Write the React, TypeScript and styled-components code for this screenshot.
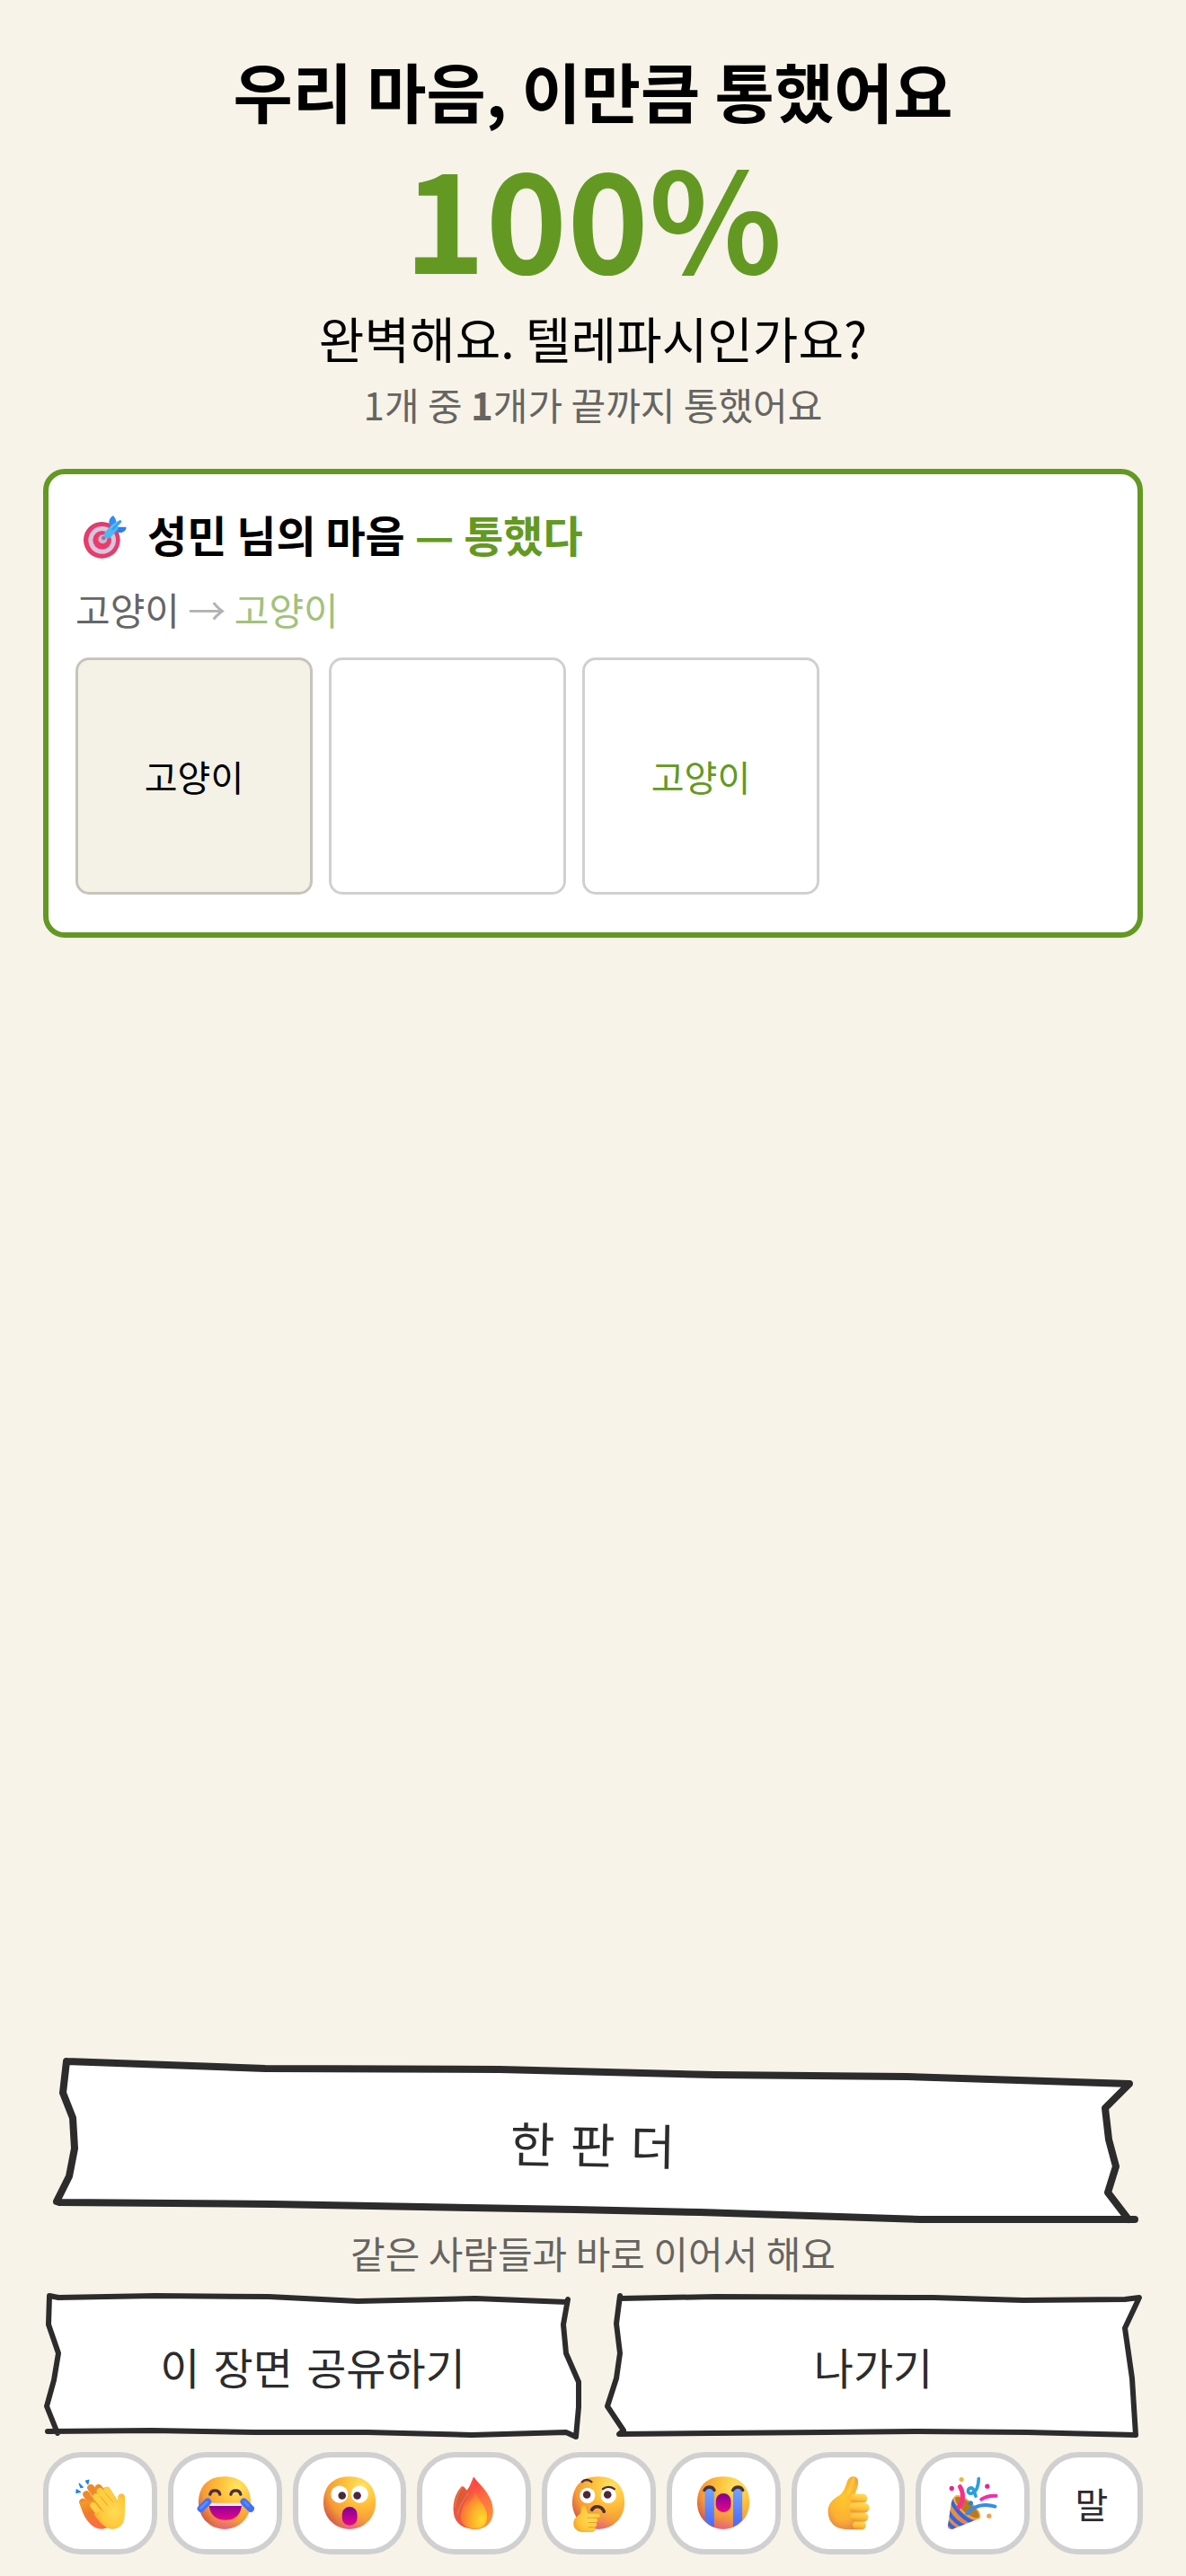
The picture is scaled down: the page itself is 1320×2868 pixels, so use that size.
import React from 'react';
import styled, { createGlobalStyle } from 'styled-components';

const GREEN = '#639922';
const INK = '#2c2c2c';

const GlobalStyle = createGlobalStyle`
  * {
    box-sizing: border-box;
  }

  body {
    margin: 0;
    background: #f7f3e8;
    color: #000;
    font-family: 'Noto Sans CJK KR', 'Noto Sans', sans-serif;
  }

  h1, h2, p {
    margin: 0;
  }

  button {
    font-family: 'DejaVu Sans', 'Noto Sans CJK KR', sans-serif;
    cursor: pointer;
  }
`;

const Page = styled.div`
  min-height: 100vh;
  padding: 48px 48px 24px;
  display: flex;
  flex-direction: column;
`;

const Header = styled.header`
  text-align: center;
  margin-bottom: 42px;
`;

const Title = styled.h1`
  font-size: 72px;
  line-height: 104px;
  font-weight: 700;
`;

const Score = styled.p`
  color: ${GREEN};
  font-size: 154px;
  line-height: 172px;
  font-weight: 700;
`;

const Verdict = styled.p`
  margin-top: 12px;
  font-size: 55px;
  line-height: 78px;
`;

const Note = styled.p`
  color: #666461;
  font-size: 42px;
  line-height: 60px;
`;

const Summary = styled(Note)`
  margin-top: 6px;
`;

const Results = styled.main`
  flex: 1;
`;

const Card = styled.section`
  padding: 30px 30px 42px;
  background: #fff;
  border: 6px solid ${GREEN};
  border-radius: 24px;
`;

const CardTitle = styled.h2`
  display: flex;
  align-items: center;
  font-size: 48px;
  line-height: 72px;
  font-weight: 700;

  svg {
    width: 60px;
    height: 60px;
    margin-right: 20px;
  }
`;

const Matched = styled.span`
  color: ${GREEN};
`;

const Chain = styled.p`
  margin: 18px 0 24px;
  color: #666;
  font-size: 42px;
  line-height: 60px;
`;

const Arrow = styled.span`
  color: #b2b2b2;
`;

const LastWord = styled.span`
  color: #a1c27a;
`;

const Steps = styled.div`
  display: flex;
  gap: 18px;
`;

const Step = styled.div<{ $kind: 'first' | 'middle' | 'last' }>`
  width: 264px;
  height: 264px;
  display: flex;
  align-items: center;
  justify-content: center;
  font-size: 40px;
  border: 3px solid ${(props) => (props.$kind === 'first' ? '#c8c4ba' : '#d0d0d0')};
  border-radius: 15px;
  background: ${(props) => (props.$kind === 'first' ? '#f4f1e6' : '#fff')};
  color: ${(props) => (props.$kind === 'last' ? GREEN : '#000')};
`;

const Footer = styled.footer`
  display: flex;
  flex-direction: column;
`;

const FooterNote = styled(Note)`
  text-align: center;
  margin-bottom: 18px;
`;

const PaperButton = styled.button<{ $large?: boolean }>`
  position: relative;
  flex: 1;
  min-height: ${(props) => (props.$large ? 186 : 156)}px;
  padding: 0;
  border: none;
  background: none;
  color: ${INK};
  font-size: ${(props) => (props.$large ? 54 : 48)}px;
`;

const Outline = styled.svg`
  position: absolute;
  inset: 0;
  width: 100%;
  height: 100%;
  overflow: visible;
`;

const Fill = styled.path`
  fill: #fff;
`;

const Line = styled.path`
  fill: none;
  stroke: ${INK};
  stroke-linecap: round;
  stroke-linejoin: round;
  vector-effect: non-scaling-stroke;
`;

const PaperLabel = styled.span<{ $tilt?: number }>`
  position: relative;
  display: inline-block;
  transform: rotate(${(props) => props.$tilt || 0}deg);
`;

const Actions = styled.div`
  display: flex;
  gap: 24px;
  margin-bottom: 18px;
`;

const Reactions = styled.div`
  display: grid;
  grid-template-columns: repeat(8, 1fr) 114px;
  gap: 12px;
`;

const Reaction = styled.button`
  height: 114px;
  padding: 0;
  display: flex;
  align-items: center;
  justify-content: center;
  background: #fff;
  border: 6px solid #d0d0d0;
  border-radius: 42px;
  color: ${INK};
  font-size: 40px;

  svg {
    width: 66px;
    height: 66px;
  }
`;

const Defs = styled.svg`
  position: absolute;
`;

interface PaperProps {
  width: number;
  height: number;
  fill: string;
  lines: string;
  stroke: number;
}

const Paper: React.FC<PaperProps> = ({ width, height, fill, lines, stroke }) => (
  <Outline viewBox={`0 0 ${width} ${height}`} preserveAspectRatio='none' aria-hidden='true'>
    <Fill d={fill} />
    <Line d={lines} strokeWidth={stroke} />
  </Outline>
);

// Gradients shared by all the reaction drawings
const Gradients = () => (
  <Defs width='0' height='0' aria-hidden='true'>
    <defs>
      <radialGradient id='face' cx='0.74' cy='0.2' r='0.86'>
        <stop offset='0' stopColor='#ffe661' />
        <stop offset='0.42' stopColor='#ffbd38' />
        <stop offset='0.78' stopColor='#f59a35' />
        <stop offset='1' stopColor='#d76045' />
      </radialGradient>
      <radialGradient id='blush' cx='0.5' cy='1.03' r='0.4'>
        <stop offset='0' stopColor='#e9609c' stopOpacity='0.85' />
        <stop offset='1' stopColor='#f58b4e' stopOpacity='0' />
      </radialGradient>
      <linearGradient id='mouth' x1='0' y1='0' x2='0' y2='1'>
        <stop offset='0.1' stopColor='#8b0095' />
        <stop offset='1' stopColor='#e6078b' />
      </linearGradient>
      <linearGradient id='tear' x1='0' y1='0' x2='0' y2='1'>
        <stop offset='0' stopColor='#70a4ff' />
        <stop offset='1' stopColor='#4564ff' />
      </linearGradient>
      <radialGradient id='palm' cx='0.65' cy='0.5' r='0.7'>
        <stop offset='0' stopColor='#ffdc55' />
        <stop offset='0.6' stopColor='#ffc93c' />
        <stop offset='1' stopColor='#f5a62d' />
      </radialGradient>
      <linearGradient id='backHand' x1='0' y1='0' x2='0.3' y2='1'>
        <stop offset='0' stopColor='#f6a327' />
        <stop offset='0.5' stopColor='#ee7c2a' />
        <stop offset='1' stopColor='#ff6d42' />
      </linearGradient>
      <radialGradient id='thumb' cx='0.45' cy='0.4' r='0.7'>
        <stop offset='0' stopColor='#ffc72d' />
        <stop offset='0.6' stopColor='#fbb132' />
        <stop offset='1' stopColor='#de7950' />
      </radialGradient>
      <linearGradient id='finger' x1='0.6' y1='0' x2='0.4' y2='1'>
        <stop offset='0' stopColor='#ffdf55' />
        <stop offset='0.6' stopColor='#ffbd38' />
        <stop offset='1' stopColor='#ee9132' />
      </linearGradient>
      <linearGradient id='flame' x1='0.3' y1='0' x2='0.7' y2='1'>
        <stop offset='0' stopColor='#fb2f40' />
        <stop offset='0.5' stopColor='#ff7041' />
        <stop offset='1' stopColor='#ff9638' />
      </linearGradient>
      <linearGradient id='flameSide' x1='0.8' y1='0' x2='0.2' y2='1'>
        <stop offset='0' stopColor='#ff5248' />
        <stop offset='0.5' stopColor='#d65c32' />
        <stop offset='1' stopColor='#f2584a' />
      </linearGradient>
      <radialGradient id='flameCore' cx='0.78' cy='0.75' r='0.8'>
        <stop offset='0' stopColor='#ffdc2c' />
        <stop offset='0.5' stopColor='#ffae2b' />
        <stop offset='1' stopColor='#ff7033' />
      </radialGradient>
      <linearGradient id='cone' x1='0' y1='0' x2='1' y2='0.4'>
        <stop offset='0' stopColor='#e39a32' />
        <stop offset='1' stopColor='#f07a55' />
      </linearGradient>
      <clipPath id='faceClip'>
        <circle cx='100' cy='98' r='88' />
      </clipPath>
      <clipPath id='coneClip'>
        <path d='M36 78 C22 96 24 130 15 174 C13 184 20 190 31 187 L119 152 C88 152 52 120 36 78Z' />
      </clipPath>
    </defs>
  </Defs>
);

const Drawing: React.FC<{ children: React.ReactNode }> = ({ children }) => (
  <svg viewBox='0 0 200 200' fill='none' strokeLinecap='round' strokeLinejoin='round' aria-hidden='true'>
    {children}
  </svg>
);

const Face = () => (
  <>
    <path fill='url(#face)' d='M100 10 C159 10 188 46 188 98 C188 148 150 187 100 187 C50 187 12 148 12 98 C12 46 41 10 100 10Z' />
    <path fill='url(#blush)' d='M100 10 C159 10 188 46 188 98 C188 148 150 187 100 187 C50 187 12 148 12 98 C12 46 41 10 100 10Z' />
  </>
);

const Clap = () => (
  <Drawing>
    <g fill='#1c84e8' stroke='#1c84e8' strokeWidth='4'>
      <path d='M22 54 L35 62 L21 65Z' />
      <path d='M31 34 L43 46 L36 47Z' />
      <path d='M53 25 L63 22 L60 35Z' />
    </g>
    <g stroke='#f08a29' strokeWidth='24'>
      <path d='M43 96 L78 150' />
      <path d='M55 70 L104 145' />
      <path d='M70 48 L120 120' />
      <path d='M96 48 L130 90' />
    </g>
    <path fill='url(#backHand)' d='M31 96 C42 138 64 187 108 187 L130 182 L90 90Z' />
    <g stroke='#eda02b' strokeWidth='25'>
      <path d='M80 108 L112 150' />
      <path d='M87 79 L125 125' />
      <path d='M100 60 L142 110' />
      <path d='M124 57 L152 102' />
    </g>
    <g stroke='#ffcf42' strokeWidth='21'>
      <path d='M78 107 L112 150' />
      <path d='M88 78 L125 125' />
      <path d='M101 59 L142 110' />
      <path d='M125 55 L152 102' />
      <path d='M173 80 L172 125' strokeWidth='24' />
    </g>
    <path
      fill='url(#palm)'
      d='M100 125 L145 87 C154 100 161 112 161 96 C162 80 164 68 175 68 C190 70 184 110 184 142 C184 173 164 187 143 187 C119 187 94 158 80 136Z'
    />
    <g stroke='#eda630' strokeWidth='3'>
      <path d='M85 94 L112 128' />
      <path d='M103 78 L128 109' />
      <path d='M119 66 L145 96' />
    </g>
  </Drawing>
);

const Joy = () => (
  <Drawing>
    <Face />
    <path d='M51 70 C55 53 80 53 84 70 M121 70 C125 53 150 53 154 70' stroke='#4d2c42' strokeWidth='10' />
    <path d='M47 100 H158 C157 136 138 157 103 157 C68 157 48 136 47 100Z' fill='url(#mouth)' />
    <path d='M47 99 H158 L157 109 H48Z' fill='#f5e6ff' />
    <g stroke='#426fff' strokeWidth='24'>
      <path d='M20 118 L43 95' />
      <path d='M165 95 L188 118' />
    </g>
    <path d='M20 116 L40 96 M168 96 L180 108' stroke='#5590ff' strokeWidth='8' />
  </Drawing>
);

const Wow = () => (
  <Drawing>
    <Face />
    <circle cx='66' cy='70' r='29' fill='#fff' />
    <circle cx='134' cy='70' r='29' fill='#fff' />
    <circle cx='75' cy='74' r='13' fill='#4b2839' />
    <circle cx='126' cy='74' r='13' fill='#4b2839' />
    <rect x='75' y='112' width='51' height='63' rx='25' fill='url(#mouth)' />
  </Drawing>
);

const Fire = () => (
  <Drawing>
    <path fill='url(#flame)' d='M98 10 C104 28 163 65 163 126 C163 160 145 187 105 187 C65 187 36 165 39 125 C42 88 88 60 98 10Z' />
    <path
      fill='url(#flameSide)'
      d='M59 43 C67 43 70 53 75 56 C86 43 90 25 97 11 C103 34 96 61 77 83 C51 113 49 153 82 185 C48 180 29 157 29 119 C29 83 45 52 59 43Z'
    />
    <path d='M58 45 C47 62 38 84 34 111 M79 67 C64 90 48 107 44 136' stroke='#f17453' strokeWidth='6' opacity='0.7' />
    <path
      fill='url(#flameCore)'
      stroke='#ff7839'
      strokeWidth='2'
      d='M104 66 C108 86 144 107 144 145 C144 169 132 187 103 187 C72 187 55 169 55 143 C55 113 90 96 104 66Z'
    />
  </Drawing>
);

const Thinking = () => (
  <Drawing>
    <Face />
    <circle cx='63' cy='74' r='26' fill='#fff' />
    <circle cx='134' cy='74' r='26' fill='#fff' />
    <circle cx='61' cy='71' r='13' fill='#4b2839' />
    <circle cx='131' cy='71' r='13' fill='#4b2839' />
    <path d='M45 28 C52 20 67 18 77 28 M115 52 C125 43 142 43 154 52' stroke='#4d2c42' strokeWidth='7' />
    <path d='M78 122 C87 106 111 108 119 128' stroke='#4d3038' strokeWidth='11' />
    <path
      fill='url(#palm)'
      stroke='#eea330'
      strokeWidth='2'
      d='M43 111 C48 101 58 108 60 119 L65 134 H98 C110 134 108 148 98 149 H91 C101 153 99 164 91 165 C97 169 95 180 87 181 C93 187 86 196 77 196 H48 C27 195 17 184 17 168 C17 154 27 145 39 135Z'
    />
    <path d='M63 149 H91 M68 165 H88 M67 181 H84' stroke='#e99a2e' strokeWidth='3' />
  </Drawing>
);

const Sob = () => (
  <Drawing>
    <Face />
    <g clipPath='url(#faceClip)'>
      <rect x='38' y='50' width='31' height='140' fill='url(#tear)' />
      <rect x='133' y='50' width='31' height='140' fill='url(#tear)' />
    </g>
    <path d='M36 56 C44 42 63 42 70 56 M132 56 C140 42 159 42 166 56' stroke='#4d3038' strokeWidth='10' />
    <rect x='75' y='67' width='51' height='63' rx='25' fill='url(#mouth)' />
  </Drawing>
);

const ThumbsUp = () => (
  <Drawing>
    <path
      fill='url(#thumb)'
      d='M97 25 C103 10 118 6 128 14 C136 22 134 38 129 52 C125 62 122 69 125 78 L148 187 C120 190 87 189 72 185 C46 176 32 154 32 127 C32 100 51 85 67 76 C83 66 91 45 97 25Z'
    />
    <rect x='107' y='68' width='57' height='31' rx='15' fill='url(#finger)' />
    <rect x='115' y='159' width='45' height='30' rx='15' fill='url(#finger)' />
    <rect x='108' y='130' width='60' height='32' rx='16' fill='url(#finger)' />
    <rect x='103' y='98' width='68' height='34' rx='17' fill='url(#finger)' />
    <path d='M118 18 C113 37 108 51 101 65' stroke='#ffd64e' strokeWidth='12' opacity='0.5' />
  </Drawing>
);

const Party = () => (
  <Drawing>
    <path d='M36 78 C22 96 24 130 15 174 C13 184 20 190 31 187 L119 152 C88 152 52 120 36 78Z' fill='url(#cone)' />
    <g clipPath='url(#coneClip)' stroke='#2e65e8' strokeWidth='13' strokeLinecap='butt'>
      <path d='M22 82 C40 124 64 153 108 168' />
      <path d='M13 122 C28 151 49 172 80 182' />
      <path d='M8 156 C20 174 31 184 49 192' />
    </g>
    <ellipse cx='80' cy='114' rx='54' ry='20' transform='rotate(41 80 114)' fill='#b97821' stroke='#efb14b' strokeWidth='5' />
    <path d='M51 114 C68 95 70 68 56 44' stroke='#fb2d8d' strokeWidth='15' />
    <path d='M80 134 C104 105 142 101 174 111' stroke='#348de8' strokeWidth='12' />
    <path d='M128 87 C144 76 160 74 177 75' stroke='#f52bab' strokeWidth='12' />
    <path d='M119 17 C118 42 112 63 94 67 C79 69 80 48 93 48 C105 49 105 66 109 76' stroke='#2a9fdf' strokeWidth='11' />
    <circle cx='61' cy='20' r='8' fill='#e8b840' />
    <circle cx='28' cy='50' r='8' fill='#e22698' />
    <circle cx='148' cy='43' r='8' fill='#e22698' />
    <circle cx='92' cy='100' r='8' fill='#2986cf' />
    <circle cx='154' cy='143' r='8' fill='#eda34c' />
  </Drawing>
);

const Target = () => (
  <svg viewBox='12 12 180 180' fill='none' aria-hidden='true'>
    <circle cx='100' cy='124' r='61' fill='#cf3d70' />
    <circle cx='100' cy='126' r='58' fill='#ea3b69' />
    <circle cx='101' cy='124' r='46' fill='#d5c7df' />
    <circle cx='101' cy='124' r='31' fill='#ec3a6b' />
    <circle cx='103' cy='121' r='15' fill='#c9b7d3' />
    <circle cx='106' cy='117' r='7' fill='#93789c' />
    <path d='M126 76 C120 59 128 48 138 42 C146 51 150 60 146 72Z' fill='#338df0' />
    <path d='M145 80 H181 C184 90 170 101 158 99 L140 93Z' fill='#2a7ff0' />
    <path d='M120 106 L142 82' stroke='#4cb8f2' strokeWidth='25' strokeLinecap='round' />
    <path d='M137 86 L161 62' stroke='#3b9cf5' strokeWidth='10' strokeLinecap='round' />
    <path d='M130 84 L152 62' stroke='#59c6f6' strokeWidth='5' strokeLinecap='round' />
  </svg>
);

const reactions = [
  { name: '박수', Icon: Clap },
  { name: '웃음', Icon: Joy },
  { name: '놀람', Icon: Wow },
  { name: '불꽃', Icon: Fire },
  { name: '생각', Icon: Thinking },
  { name: '눈물', Icon: Sob },
  { name: '좋아요', Icon: ThumbsUp },
  { name: '축하', Icon: Party },
];

const App: React.FC = () => {
  return (
    <>
      <GlobalStyle />
      <Gradients />
      <Page>
        <Header>
          <Title>우리 마음, 이만큼 통했어요</Title>
          <Score>100%</Score>
          <Verdict>완벽해요. 텔레파시인가요?</Verdict>
          <Summary>
            1개 중 <b>1</b>개가 끝까지 통했어요
          </Summary>
        </Header>
        <Results>
          <Card>
            <CardTitle>
              <Target />
              <span>
                성민 님의 마음 <Matched>— 통했다</Matched>
              </span>
            </CardTitle>
            <Chain>
              고양이 <Arrow>→</Arrow> <LastWord>고양이</LastWord>
            </Chain>
            <Steps>
              <Step $kind='first'>고양이</Step>
              <Step $kind='middle' />
              <Step $kind='last'>고양이</Step>
            </Steps>
          </Card>
        </Results>
        <Footer>
          <PaperButton $large type='button'>
            <Paper
              width={1224}
              height={186}
              stroke={8}
              fill='M26 3 L247 11 L508 12 L748 18 L961 20 L1209 28 L1182 55 L1186 90 L1194 120 L1185 149 L1208 179 L976 179 L731 171 L592 168 L256 162 L15 159 L29 131 L35 100 L33 66 L22 38Z'
              lines='M26 3 L247 11 L508 12 L748 18 L961 20 L1209 28 L1182 55 L1186 90 L1194 120 L1185 149 L1208 179 M1215 179 L976 179 L731 171 L592 168 L256 162 L18 160 L15 159 L29 131 L35 100 L33 66 L22 38 L26 3'
            />
            <PaperLabel $tilt={1}>한 판 더</PaperLabel>
          </PaperButton>
          <FooterNote>같은 사람들과 바로 이어서 해요</FooterNote>
          <Actions>
            <PaperButton type='button'>
              <Paper
                width={600}
                height={156}
                stroke={6}
                fill='M7 0 L17 2 L125 0 L251 1 L350 6 L481 3 L583 7 L579 32 L582 64 L596 96 L596 124 L593 157 L582 152 L477 155 L361 152 L235 152 L121 150 L14 151 L4 123 L12 94 L17 64 L6 32Z'
                lines='M7 0 L17 2 L125 0 L251 1 L350 6 L481 3 L583 7 M584 4 L579 32 L582 64 L596 96 L596 124 L593 157 L582 152 L477 155 L361 152 L235 152 L121 150 L5 151 M16 153 L4 123 L12 94 L17 64 L6 32 L7 0'
              />
              <PaperLabel>이 장면 공유하기</PaperLabel>
            </PaperButton>
            <PaperButton type='button'>
              <Paper
                width={600}
                height={156}
                stroke={6}
                fill='M18 2 L124 1 L367 2 L467 5 L580 4 L596 2 L580 36 L588 92 L592 155 L471 152 L350 151 L246 152 L17 154 L22 150 L4 123 L14 92 L18 64 L14 31Z'
                lines='M18 3 L124 1 L367 2 L467 5 L580 4 L596 2 L580 36 L588 92 L592 155 L471 152 L350 151 L246 152 L120 153 L17 154 L22 150 L4 123 L14 92 L18 64 L14 31 L18 0'
              />
              <PaperLabel>나가기</PaperLabel>
            </PaperButton>
          </Actions>
          <Reactions>
            {reactions.map(({ name, Icon }) => (
              <Reaction key={name} type='button' aria-label={name}>
                <Icon />
              </Reaction>
            ))}
            <Reaction type='button'>말</Reaction>
          </Reactions>
        </Footer>
      </Page>
    </>
  );
};

export default App;
